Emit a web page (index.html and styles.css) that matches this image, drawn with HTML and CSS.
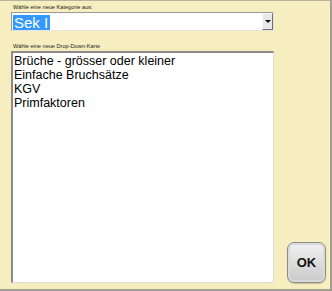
FILE: index.html
```html
<!DOCTYPE html>
<html>
<head>
    <title>Kategorie</title>
    <link rel="stylesheet" href="styles.css">
</head>
<body>
    <div class="panel">
        <div class="main">
            <div class="label">Wähle eine neue Kategorie aus:</div>
            <div class="combo">
                <div class="combo-text"><span class="selected">Sek I</span></div>
                <div class="combo-btn"><span class="arrow"></span></div>
            </div>

            <div class="label second">Wähle eine neue Drop-Down-Karte</div>
            <div class="listbox">
                <div class="item">Brüche - grösser oder kleiner</div>
                <div class="item">Einfache Bruchsätze</div>
                <div class="item">KGV</div>
                <div class="item">Primfaktoren</div>
            </div>
        </div>
        <div class="side">
            <button class="ok">OK</button>
        </div>
    </div>
</body>
</html>
```

FILE: styles.css
```css
html, body {
    margin: 0;
    padding: 0;
}
body {
    font-family: "Liberation Sans", Arial, sans-serif;
    background: #f7eebf;
}
.panel {
    width: 330px;
    height: 288px;
    background: #f7eebf;
    border-top: 1px solid #b8b4a0;
    border-right: 2px solid #a09e94;
    border-bottom: 2px solid #a09e94;
    display: flex;
}
.main {
    width: 263px;
    margin-left: 11px;
    display: flex;
    flex-direction: column;
}
.label {
    font-size: 5.6px;
    color: #222;
    height: 8px;
    line-height: 8px;
    margin-top: 2px;
    padding-left: 2px;
}
.label.second {
    margin-top: 11px;
}
.combo {
    margin-top: 1px;
    height: 19px;
    display: flex;
    background: white;
    border-top: 1px solid #9a9a9a;
    border-left: 1px solid #9a9a9a;
    border-bottom: 1px solid #e4e4e4;
    border-right: 1px solid #e4e4e4;
    box-sizing: border-box;
}
.combo-text {
    flex: 1;
    padding: 1px 0 0 1px;
}
.selected {
    display: inline-block;
    background: #3399ff;
    color: white;
    font-size: 15px;
    line-height: 15px;
    padding: 0 2px 0 1px;
}
.combo-btn {
    width: 11px;
    background: #e8e8e8;
    border-left: 1px solid #f8f8f8;
    border-top: 1px solid #f8f8f8;
    border-right: 1px solid #707070;
    border-bottom: 1px solid #707070;
    box-sizing: border-box;
    display: flex;
    align-items: center;
    justify-content: center;
}
.arrow {
    width: 0;
    height: 0;
    border-left: 3px solid transparent;
    border-right: 3px solid transparent;
    border-top: 3px solid #111;
}
.listbox {
    margin-top: 1px;
    height: 232px;
    background: white;
    border-top: 2px solid #8a8a8a;
    border-left: 2px solid #8a8a8a;
    border-right: 1px solid #dcdcdc;
    border-bottom: 1px solid #dcdcdc;
    box-sizing: border-box;
    padding: 1px 0 0 1px;
}
.item {
    font-size: 12.5px;
    line-height: 14px;
    color: #000;
}
.side {
    flex: 1;
    display: flex;
    align-items: flex-end;
    justify-content: flex-end;
    padding: 0 4px 6px 0;
}
.ok {
    width: 39px;
    height: 41px;
    border: 1px solid #8c8c8c;
    border-radius: 7px;
    background: linear-gradient(#f2f2f2, #c9c9c9);
    box-shadow: inset 0 0 0 2px #dadada, 0 1px 1px rgba(0,0,0,0.2);
    font-family: "Liberation Sans", Arial, sans-serif;
    font-weight: bold;
    font-size: 13px;
    color: #111;
    padding: 0;
}
```
